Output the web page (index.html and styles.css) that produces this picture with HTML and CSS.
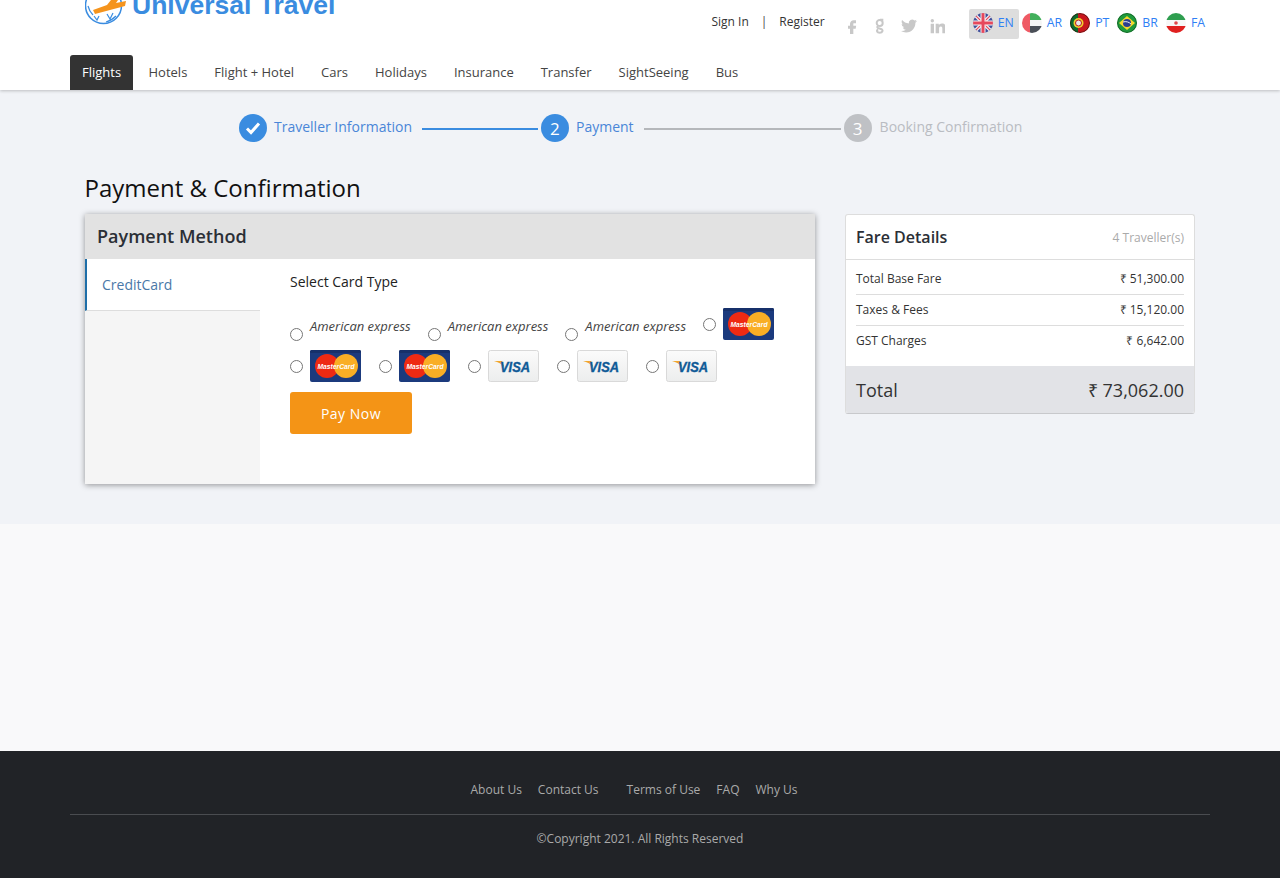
FILE: index.html
```html
<!DOCTYPE html>
<html lang="en">
<head>
  <meta charset="utf-8">
  <title>Universal Travel - Payment</title>
  <link rel="stylesheet" href="styles.css">
</head>
<body>
  <svg class="defs" width="0" height="0">
    <defs>
      <linearGradient id="visabg" x1="0" y1="0" x2="0" y2="1">
        <stop offset="0" stop-color="#fbfbfb"/>
        <stop offset="1" stop-color="#eceded"/>
      </linearGradient>
    </defs>
    <symbol id="mastercard" viewBox="0 0 51 32">
      <rect width="51" height="32" rx="2" fill="#1b3a7d"/>
      <rect width="51" height="3" rx="1.5" fill="#16306a"/>
      <circle cx="17" cy="16" r="12" fill="#ee2a13"/>
      <circle cx="36" cy="16" r="12" fill="#f9ae25"/>
    </symbol>
    <symbol id="visa" viewBox="0 0 51 32">
      <rect x=".5" y=".5" width="50" height="31" rx="2" fill="url(#visabg)" stroke="#d9d9d9"/>
      <path d="M6 11h8l2 6c-2-3-6-5-10-6z" fill="#f0a62c"/>
    </symbol>
  </svg>

  <header class="site-header">
    <div class="container">
      <div class="header-top">
        <a class="logo" href="#">
          <svg class="logo-mark" width="42" height="44" viewBox="0 0 42 44">
            <circle cx="18.500" cy="24.500" r="18" fill="none" stroke="#3a8ce0" stroke-width="1.500"/>
            <path d="M9 35l3 4 2-4M22 33l3 5 3-6M31 35c-3 3-6 5-10 6M3 25c1 4 3 7 5 9" fill="none" stroke="#3a8ce0" stroke-width="1.200"/>
            <path d="M8 29l14-5 4-5h7l-2 3 10-2-1 5-30 8z" fill="#f5941d"/>
          </svg>
          <span class="logo-text">Universal Travel</span>
        </a>
        <div class="top-links">
          <a href="#">Sign In</a>
          <span class="sep">|</span>
          <a href="#">Register</a>
        </div>
        <div class="socials">
          <svg width="16" height="16" viewBox="0 0 24 24"><path d="M14.500 8H18V3.500h-3.500C11.500 3.500 9 6 9 9v2.500H6v4.500h3v8h5v-8h3.500l.8-4.500H14V9c0-.6.100-1 .5-1z"/></svg>
          <svg width="16" height="16" viewBox="0 0 24 24"><path class="g-stroke" d="M12 2.500h5M11.500 3a4.500 4.500 0 1 0 .1 9 4.500 4.500 0 0 0-.1-9zM9 12c-2 1.500-1 3 1 3.500l3.500 1c4 1.200 2.500 5.500-2 5.500-4 0-5.500-3-2.500-5"/></svg>
          <svg width="16" height="16" viewBox="0 0 24 24"><path d="M23.953 4.570a10 10 0 01-2.825.775 4.958 4.958 0 002.163-2.723c-.951.555-2.005.959-3.127 1.184a4.920 4.920 0 00-8.384 4.482C7.690 8.095 4.067 6.130 1.640 3.162a4.822 4.822 0 00-.666 2.475c0 1.710.870 3.213 2.188 4.096a4.904 4.904 0 01-2.228-.616v.060a4.923 4.923 0 003.946 4.827 4.996 4.996 0 01-2.212.085 4.936 4.936 0 004.604 3.417 9.867 9.867 0 01-6.102 2.105c-.390 0-.779-.023-1.170-.067a13.995 13.995 0 007.557 2.209c9.053 0 13.998-7.496 13.998-13.985 0-.210 0-.420-.015-.630A9.935 9.935 0 0024 4.590z"/></svg>
          <svg width="16" height="16" viewBox="0 0 24 24"><path d="M4.980 1.500a2.600 2.600 0 11-.020 5.200 2.600 2.600 0 01.020-5.200zM2.500 8.500h5V23h-5zM10 8.500h4.700v2h.060c.650-1.200 2.250-2.400 4.640-2.400 4.950 0 5.600 3.200 5.600 7.400V23h-5v-6.600c0-1.600-.020-3.600-2.250-3.600-2.260 0-2.600 1.700-2.600 3.500V23H10z"/></svg>
        </div>
        <div class="langs">
          <a class="lang active" href="#">
            <svg class="flag" viewBox="0 0 20 20">
              <clipPath id="c1"><circle cx="10" cy="10" r="10"/></clipPath>
              <g clip-path="url(#c1)">
                <rect width="20" height="20" fill="#3f4f9b"/>
                <path d="M0 0l20 20M20 0L0 20" stroke="#f4f4f4" stroke-width="3.500"/>
                <path d="M0 0l20 20M20 0L0 20" stroke="#e6485c" stroke-width="1.200"/>
                <path d="M10 0v20M0 10h20" stroke="#f4f4f4" stroke-width="5"/>
                <path d="M10 0v20M0 10h20" stroke="#e6485c" stroke-width="3"/>
              </g>
            </svg>
            <span>EN</span>
          </a>
          <a class="lang" href="#">
            <svg class="flag" viewBox="0 0 20 20">
              <clipPath id="c2"><circle cx="10" cy="10" r="10"/></clipPath>
              <g clip-path="url(#c2)">
                <rect width="8" height="20" fill="#ef5a64"/>
                <rect x="8" width="12" height="7" fill="#42b05c"/>
                <rect x="8" y="7" width="12" height="6" fill="#f5f5f5"/>
                <rect x="8" y="13" width="12" height="7" fill="#4a4f57"/>
              </g>
            </svg>
            <span>AR</span>
          </a>
          <a class="lang" href="#">
            <svg class="flag" viewBox="0 0 20 20">
              <clipPath id="c3"><circle cx="10" cy="10" r="10"/></clipPath>
              <g clip-path="url(#c3)">
                <rect width="20" height="20" fill="#c8171d"/>
                <rect width="8" height="20" fill="#0f6a2c"/>
                <circle cx="8.500" cy="10" r="5" fill="#f2d02c"/>
                <circle cx="8.500" cy="10" r="3" fill="#e8e8e8" stroke="#b91a1e"/>
                <circle cx="10" cy="10" r="9.500" fill="none" stroke="#111" stroke-opacity=".55"/>
              </g>
            </svg>
            <span>PT</span>
          </a>
          <a class="lang" href="#">
            <svg class="flag" viewBox="0 0 20 20">
              <clipPath id="c4"><circle cx="10" cy="10" r="10"/></clipPath>
              <g clip-path="url(#c4)">
                <rect width="20" height="20" fill="#1f9a3c"/>
                <path d="M10 3l8 7-8 7-8-7z" fill="#f5d92c"/>
                <circle cx="10" cy="10" r="4" fill="#2a3f8f"/>
                <path d="M6 9c3-1 6 0 8 2" stroke="#eee" fill="none"/>
                <circle cx="10" cy="10" r="9.500" fill="none" stroke="#0b3d18" stroke-opacity=".6"/>
              </g>
            </svg>
            <span>BR</span>
          </a>
          <a class="lang" href="#">
            <svg class="flag" viewBox="0 0 20 20">
              <clipPath id="c5"><circle cx="10" cy="10" r="10"/></clipPath>
              <g clip-path="url(#c5)">
                <rect width="20" height="7" fill="#2e9e4f"/>
                <rect y="7" width="20" height="6" fill="#f7f7f7"/>
                <rect y="13" width="20" height="7" fill="#e0201f"/>
                <circle cx="10" cy="10" r="1.800" fill="#e0484a"/>
              </g>
            </svg>
            <span>FA</span>
          </a>
        </div>
      </div>
      <nav class="main-nav">
        <a class="active" href="#">Flights</a>
        <a href="#">Hotels</a>
        <a href="#">Flight + Hotel</a>
        <a href="#">Cars</a>
        <a href="#">Holidays</a>
        <a href="#">Insurance</a>
        <a href="#">Transfer</a>
        <a href="#">SightSeeing</a>
        <a href="#">Bus</a>
      </nav>
    </div>
  </header>

  <main class="page-body">
    <div class="container">
      <div class="stepper">
        <span class="step-num done">
          <svg width="16" height="14" viewBox="0 0 16 14"><path d="M2 7.500l4 4 8-9" fill="none" stroke="#fff" stroke-width="3"/></svg>
        </span>
        <span class="step-label">Traveller Information</span>
        <span class="step-line line-one"></span>
        <span class="step-num">2</span>
        <span class="step-label">Payment</span>
        <span class="step-line line-two"></span>
        <span class="step-num off">3</span>
        <span class="step-label off">Booking Confirmation</span>
      </div>

      <div class="inner">
        <h1 class="page-title">Payment &amp; Confirmation</h1>
        <div class="columns">
          <section class="pay-panel">
            <h2 class="pay-head">Payment Method</h2>
            <div class="pay-body">
              <div class="pay-tabs">
                <a class="pay-tab" href="#">CreditCard</a>
              </div>
              <div class="pay-content">
                <p class="card-title">Select Card Type</p>
                <div class="card-row">
                  <label class="card-opt text-opt"><input type="radio" name="card"><em>American express</em></label>
                  <label class="card-opt text-opt"><input type="radio" name="card"><em>American express</em></label>
                  <label class="card-opt text-opt"><input type="radio" name="card"><em>American express</em></label>
                  <label class="card-opt"><input type="radio" name="card"><svg class="card-img" viewBox="0 0 51 32"><use href="#mastercard"/><text x="7.500" y="19" textLength="37" lengthAdjust="spacingAndGlyphs" class="mc-text">MasterCard</text></svg></label>
                </div>
                <div class="card-row">
                  <label class="card-opt"><input type="radio" name="card"><svg class="card-img" viewBox="0 0 51 32"><use href="#mastercard"/><text x="7.500" y="19" textLength="37" lengthAdjust="spacingAndGlyphs" class="mc-text">MasterCard</text></svg></label>
                  <label class="card-opt"><input type="radio" name="card"><svg class="card-img" viewBox="0 0 51 32"><use href="#mastercard"/><text x="7.500" y="19" textLength="37" lengthAdjust="spacingAndGlyphs" class="mc-text">MasterCard</text></svg></label>
                  <label class="card-opt"><input type="radio" name="card"><svg class="card-img" viewBox="0 0 51 32"><use href="#visa"/><text x="12" y="22" textLength="30" lengthAdjust="spacingAndGlyphs" class="visa-text">VISA</text></svg></label>
                  <label class="card-opt"><input type="radio" name="card"><svg class="card-img" viewBox="0 0 51 32"><use href="#visa"/><text x="12" y="22" textLength="30" lengthAdjust="spacingAndGlyphs" class="visa-text">VISA</text></svg></label>
                  <label class="card-opt"><input type="radio" name="card"><svg class="card-img" viewBox="0 0 51 32"><use href="#visa"/><text x="12" y="22" textLength="30" lengthAdjust="spacingAndGlyphs" class="visa-text">VISA</text></svg></label>
                </div>
                <button class="pay-btn" type="button">Pay Now</button>
              </div>
            </div>
          </section>

          <aside class="fare-card">
            <div class="fare-head">
              <h3>Fare Details</h3>
              <span>4 Traveller(s)</span>
            </div>
            <div class="fare-rows">
              <div class="fare-row"><span>Total Base Fare</span><span>₹ 51,300.00</span></div>
              <div class="fare-row"><span>Taxes &amp; Fees</span><span>₹ 15,120.00</span></div>
              <div class="fare-row"><span>GST Charges</span><span>₹ 6,642.00</span></div>
            </div>
            <div class="fare-total"><span>Total</span><span>₹ 73,062.00</span></div>
          </aside>
        </div>
      </div>
    </div>
  </main>

  <div class="blank-band"></div>

  <footer class="site-footer">
    <div class="container">
      <div class="footer-links">
        <a href="#">About Us</a>
        <a href="#">Contact Us</a>
        <a class="terms" href="#">Terms of Use</a>
        <a href="#">FAQ</a>
        <a href="#">Why Us</a>
      </div>
      <p class="copyright">©Copyright 2021. All Rights Reserved</p>
    </div>
  </footer>
</body>
</html>
```

FILE: styles.css
```css
body{
  margin: 0;
  font-family: "Open Sans", sans-serif;
  font-size: 13px;
  color: #222;
  background: #f9f9fa;
}
a{
  text-decoration: none;
  color: inherit;
}
.defs{
  display: block;
  height: 0;
}
.mc-text{
  font-family: "Liberation Sans", sans-serif;
  font-size: 7.8px;
  font-weight: bold;
  font-style: italic;
  fill: #fff;
}
.visa-text{
  font-family: "Liberation Sans", sans-serif;
  font-size: 15px;
  font-weight: bold;
  font-style: italic;
  fill: #0f5a97;
  stroke: #0f5a97;
  stroke-width: .4px;
}
.container{
  width: 1140px;
  margin: 0 auto;
}

/* header */
.site-header{
  height: 90px;
  background: #fff;
  box-shadow: 0 1px 3px rgba(0,0,0,.22);
  position: relative;
}
.header-top{
  height: 55px;
  display: flex;
  overflow: hidden;
}
.logo{
  display: flex;
  align-items: flex-start;
  gap: 5px;
  margin-left: 15px;
  height: 25px;
  color: #3a8ce0;
}
.logo-mark{
  margin-top: -19px;
  flex: none;
}
.logo-text{
  font-family: "Liberation Sans", sans-serif;
  font-size: 26.5px;
  font-weight: bold;
  line-height: 26px;
  margin-top: -8px;
}
.top-links{
  display: flex;
  gap: 12px;
  margin-left: auto;
  padding-top: 13px;
  font-size: 12px;
  line-height: 17px;
  color: #333;
}
.sep{
  color: #444;
}
.socials{
  display: flex;
  gap: 12.5px;
  margin-left: 19px;
  padding-top: 18px;
  fill: #c8c8c8;
}
.g-stroke{
  fill: none;
  stroke: #c8c8c8;
  stroke-width: 3;
}
.langs{
  display: flex;
  gap: 3px;
  margin-left: 23.5px;
  padding-top: 9px;
}
.lang{
  display: flex;
  align-items: center;
  gap: 5px;
  height: 30px;
  padding: 0 5px 0 0;
  font-size: 12.3px;
  color: #2f80f5;
}
.lang span{
  padding-bottom: 4px;
}
.lang:last-child{
  padding-right: 5px;
}
.lang.active{
  background: #ddd;
  border-radius: 2px;
  padding: 0 5px 0 4px;
}
.flag{
  width: 20px;
  height: 20px;
  margin-bottom: 2px;
}
.main-nav{
  display: flex;
  gap: 3px;
  height: 35px;
}
.main-nav a{
  padding: 0 12px;
  line-height: 35px;
  color: #444;
}
.main-nav a.active{
  background: #333;
  color: #fff;
  border-radius: 3px 3px 0 0;
  margin-right: .4px;
}

/* stepper + body */
.page-body{
  height: 434px;
  background: #f1f3f7;
}
.stepper{
  display: flex;
  align-items: center;
  height: 28px;
  padding: 24px 0 0 169px;
  font-size: 14px;
}
.step-num{
  width: 28px;
  height: 28px;
  border-radius: 50%;
  background: #3a8ce0;
  color: #fff;
  font-size: 17px;
  display: flex;
  align-items: center;
  justify-content: center;
  flex: none;
}
.step-num.off{
  background: #bfc1c5;
}
.step-label{
  margin-left: 7px;
  padding-bottom: 4px;
  color: #4a86d8;
}
.step-label.off{
  margin-left: 8px;
  color: #b9bcc2;
}
.step-line{
  height: 2px;
  margin: 2px 3px 0 10px;
  background: #3a8ce0;
}
.line-one{
  width: 116px;
}
.line-two{
  width: 197px;
  background: #b5b7bb;
}
.inner{
  padding: 0 15px;
}
.page-title{
  margin: 29px 0 10px -.5px;
  font-size: 24px;
  font-weight: 400;
  line-height: 33px;
  color: #111;
}
.columns{
  display: flex;
  gap: 30px;
}
.pay-panel{
  width: 730px;
  height: 270px;
  display: flex;
  flex-direction: column;
  background: #fff;
  box-shadow: 0 1px 6px rgba(0,0,0,.4);
}
.pay-head{
  margin: 0;
  padding: 0 12px;
  height: 45px;
  flex: none;
  background: #e2e2e2;
  font-size: 18px;
  font-weight: 600;
  line-height: 45px;
  color: #2b2f36;
}
.pay-body{
  display: flex;
  flex: 1;
}
.pay-tabs{
  width: 175px;
  background: #f5f5f5;
}
.pay-tab{
  display: block;
  height: 51px;
  padding-left: 15px;
  line-height: 51px;
  font-size: 14px;
  color: #4a78a8;
  background: #fff;
  border-left: 2px solid #1f6fa8;
  border-bottom: 1px solid #ddd;
}
.pay-content{
  padding: 0 30px;
  flex: 1;
}
.card-title{
  margin: 13px 0 16px;
  font-size: 14px;
  line-height: 20px;
  color: #222;
}
.card-row{
  display: flex;
  gap: 18px;
  margin-bottom: 10px;
}
.card-row:first-of-type{
  gap: 17px;
}
.card-opt{
  display: flex;
  align-items: center;
  gap: 7px;
  height: 32px;
}
.card-opt input{
  margin: 0;
  width: 13px;
  height: 13px;
}
.card-img{
  width: 51px;
  height: 32px;
}
.text-opt{
  align-items: flex-start;
}
.text-opt input{
  margin-top: 20px;
}
.text-opt em{
  margin-top: 9px;
  font-size: 13px;
  line-height: 18px;
  color: #444;
}
.pay-btn{
  width: 122px;
  height: 42px;
  border: none;
  border-radius: 3px;
  background: #f49416;
  color: #fff;
  font-family: inherit;
  font-size: 14px;
  font-weight: 500;
  letter-spacing: .5px;
}

/* fare card */
.fare-card{
  width: 350px;
  height: 200px;
  box-sizing: border-box;
  display: flex;
  flex-direction: column;
  background: #fff;
  border: 1px solid #ddd;
  border-bottom-color: #c8c9cc;
  border-radius: 3px;
  overflow: hidden;
}
.fare-head{
  display: flex;
  justify-content: space-between;
  align-items: center;
  height: 44px;
  flex: none;
  padding: 0 10px;
  border-bottom: 1px solid #ddd;
}
.fare-head h3{
  margin: 0;
  font-size: 16px;
  font-weight: 600;
  color: #2b2f36;
}
.fare-head span{
  font-size: 12px;
  color: #aaa;
}
.fare-rows{
  flex: 1;
  padding: 4px 10px 0;
}
.fare-row{
  display: flex;
  justify-content: space-between;
  height: 30px;
  line-height: 30px;
  font-size: 12px;
  color: #333;
  border-bottom: 1px solid #ddd;
}
.fare-row:last-child{
  border-bottom: none;
}
.fare-total{
  display: flex;
  justify-content: space-between;
  align-items: center;
  height: 47px;
  flex: none;
  padding: 0 10px;
  background: #e2e3e7;
  font-size: 18px;
  color: #333;
}

.blank-band{
  height: 227px;
}

/* footer */
.site-footer{
  height: 127px;
  background: #212327;
  color: #aaa;
  font-size: 12px;
}
.footer-links{
  display: flex;
  justify-content: center;
  gap: 16px;
  height: 64px;
  box-sizing: border-box;
  padding: 30px 12px 0 0;
  line-height: 17px;
  border-bottom: 1px solid #4a4c50;
}
.footer-links .terms{
  margin-left: 12px;
}
.copyright{
  margin: 15px 0 0;
  text-align: center;
  line-height: 17px;
}
```
